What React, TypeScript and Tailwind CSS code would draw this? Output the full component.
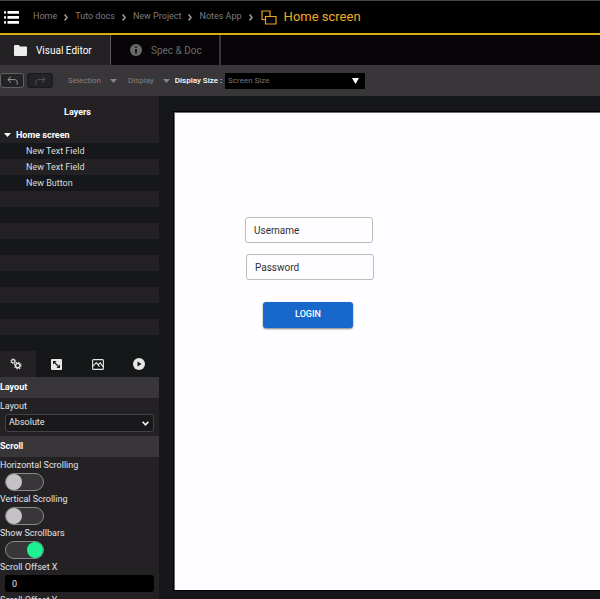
import { useState } from 'react';
import type { ReactNode } from 'react';

const breadcrumbs = ['Home', 'Tuto docs', 'New Project', 'Notes App'];

const layers = ['New Text Field', 'New Text Field', 'New Button'];

const EMPTY_ROWS = 9;

function Crumb({ label }: { label: string }) {
  return (
    <li className="flex items-center gap-[7px]">
      <a href="#" className="text-[9px] text-[#7d7d7d]">
        {label}
      </a>
      <svg className="w-1 h-[7px]" viewBox="0 0 4 7" fill="none" stroke="#a0a0a0" strokeWidth="1.5">
        <path d="M.6.5 3.1 3.5.6 6.5" />
      </svg>
    </li>
  );
}

function Caret() {
  return (
    <svg className="w-[7px] h-1 shrink-0" viewBox="0 0 7 4" fill="currentColor">
      <path d="M0 0h7L3.5 4z" />
    </svg>
  );
}

function SectionTitle({ children }: { children: ReactNode }) {
  return <h3 className="h-[21px] shrink-0 bg-[#383638] text-[9px] leading-5 font-bold text-white">{children}</h3>;
}

function Toggle({ id, label, defaultChecked = false }: { id: string; label: string; defaultChecked?: boolean }) {
  const [checked, setChecked] = useState(defaultChecked);

  return (
    <div className="flex flex-col items-start">
      <label htmlFor={id} className="h-4 text-[9px] leading-4 text-[#e4e4e4]">
        {label}
      </label>
      <input
        id={id}
        type="checkbox"
        checked={checked}
        onChange={(e) => setChecked(e.target.checked)}
        className="ml-[5px] flex h-[18px] w-[39px] appearance-none items-center rounded-full border border-[#8a8a8a] bg-[#383638] before:block before:size-4 before:rounded-full before:bg-[#c4c2c4] checked:justify-end checked:before:bg-[#1df293]"
      />
    </div>
  );
}

function Header() {
  return (
    <header className="flex h-[35px] shrink-0 items-center border-t border-b-2 border-t-[#444444] border-b-[#dba912] bg-black pl-1">
      <button aria-label="Menu">
        <svg className="block w-[15px] h-[13px]" viewBox="0 0 15 13" fill="#fff">
          <path d="M0 .3h2v2.200H0zM0 5.300h2v2.200H0zM0 10.300h2v2.200H0zM3.500 0H15v2.800H3.500zM3.500 5H15v2.800H3.500zM3.500 10H15v2.800H3.500z" />
        </svg>
      </button>
      <nav aria-label="Breadcrumb" className="ml-[14px]">
        <ol className="flex items-center gap-[7px]">
          {breadcrumbs.map((label) => (
            <Crumb key={label} label={label} />
          ))}
        </ol>
      </nav>
      <svg className="ml-2 w-4 h-[15px]" viewBox="0 0 16 15" fill="none" stroke="#e5a21c" strokeWidth="1.2">
        <path d="M4 9.500H1V1h8v5.500" />
        <path d="M4.500 6.500H15V14H4.500z" />
      </svg>
      <h1 className="ml-[7px] text-[13px] text-[#efab20]">Home screen</h1>
    </header>
  );
}

function EditorTabs() {
  return (
    <nav className="flex h-[30px] shrink-0 bg-[#070508] text-[10px]">
      <button className="flex w-[111px] items-center gap-[9px] border-r border-[#5a585a] bg-[#232123] pl-[14px] text-white">
        <svg className="w-[13px] h-[11px]" viewBox="0 0 13 11" fill="#ececec">
          <path d="M0 1.2C0 .5.5 0 1.2 0h3.6l1.400 1.500h5.600c.7 0 1.200.5 1.200 1.200v7c0 .7-.5 1.300-1.200 1.300H1.200C.5 11 0 10.400 0 9.700z" />
        </svg>
        Visual Editor
      </button>
      <button className="flex w-[110px] items-center gap-[9px] border-r-2 border-[#383638] pl-[19px] text-[#6a696a]">
        <svg className="size-3" viewBox="0 0 12 12">
          <circle cx="6" cy="6" r="6" fill="#6a696a" />
          <path d="M5.200 2.500h1.600v1.500H5.200zM5.200 5h1.600v4.500H5.200z" fill="#070508" />
        </svg>
        Spec &amp; Doc
      </button>
    </nav>
  );
}

function Toolbar() {
  return (
    <div className="flex h-[31px] shrink-0 items-center bg-[#383638] text-[8px] text-[#858385]">
      <button
        aria-label="Undo"
        className="flex h-[15px] w-6 items-center justify-center rounded-[3px] border border-[#636163] bg-[#232325] text-[#9a9a9a]"
      >
        <svg className="w-[11px] h-[9px]" viewBox="0 0 11 9" fill="none" stroke="currentColor">
          <path d="M4 .600.800 3.600 4 6.600M1 3.600h6.500c1.800 0 2.700 1 2.700 2.500V8.600" />
        </svg>
      </button>
      <button
        aria-label="Redo"
        className="ml-[3px] flex h-[15px] w-[26px] items-center justify-center rounded-[3px] border border-[#19191b] bg-[#232325] text-[#555355]"
      >
        <svg className="w-[11px] h-[9px]" viewBox="0 0 11 9" fill="none" stroke="currentColor">
          <path d="m7 .600 3.200 3L7 6.600M10 3.600H3.500C1.700 3.600.800 4.600.800 6.100V8.600" />
        </svg>
      </button>
      <button className="ml-[15px] flex items-center gap-[9px]">
        Selection
        <Caret />
      </button>
      <button className="ml-[11px] flex items-center gap-[9px]">
        Display
        <Caret />
      </button>
      <label htmlFor="display-size" className="ml-[5px] font-medium text-white">
        Display Size :
      </label>
      <div className="ml-[3px] grid w-[140px] items-center">
        <select
          id="display-size"
          className="col-start-1 row-start-1 h-4 appearance-none bg-black pl-[3px] text-[8px] text-[#777777]"
        >
          <option>Screen Size</option>
        </select>
        <svg
          className="pointer-events-none col-start-1 row-start-1 mr-[6px] h-[6px] w-[7px] justify-self-end"
          viewBox="0 0 7 6"
          fill="#fff"
        >
          <path d="M0 0h7L3.500 6z" />
        </svg>
      </div>
    </div>
  );
}

function LayerTree() {
  return (
    <section className="shrink-0 text-[9px] text-[#dcdcdc]">
      <h2 className="h-[31px] bg-[#232123] pr-1 text-center leading-8 font-bold text-white">Layers</h2>
      <ul className="leading-[17px]">
        <li className="flex h-4 items-center gap-[5px] bg-[#232123] pl-1 font-bold text-white">
          <Caret />
          Home screen
        </li>
        {layers.map((name, i) => (
          <li key={i} className="h-4 pl-[26px] odd:bg-[#232123]">
            {name}
          </li>
        ))}
        {Array.from({ length: EMPTY_ROWS }, (_, i) => (
          <li key={`empty-${i}`} className="h-4 odd:bg-[#232123]" />
        ))}
      </ul>
    </section>
  );
}

function PropertyTabs() {
  return (
    <div className="mt-4 flex h-[26px] shrink-0 bg-[#151719] text-[#e6e6e6]">
      <button aria-label="Settings" className="flex w-9 items-center justify-center bg-[#232123] pr-[5px]">
        <svg className="size-3" viewBox="0 0 12 12" fill="none" stroke="currentColor">
          <circle cx="3.200" cy="3.300" r="1.700" strokeWidth="1.100" />
          <circle cx="3.200" cy="3.300" r="2.500" strokeWidth=".8" strokeDasharray="1 .963" />
          <circle cx="7.800" cy="7.600" r="2.200" strokeWidth="1.400" />
          <circle cx="7.800" cy="7.600" r="3.300" strokeWidth="1.100" strokeDasharray="1.300 1.292" />
        </svg>
      </button>
      <button aria-label="Size" className="flex flex-1 items-center justify-center">
        <svg className="size-[11px]" viewBox="0 0 11 11">
          <rect width="11" height="11" rx="1" fill="currentColor" />
          <path d="M2 2h3.600L2 5.600zM9 9H5.400L9 5.400z" fill="#151719" />
          <path d="m3 3 5 5" stroke="#151719" strokeWidth="1.100" />
        </svg>
      </button>
      <button aria-label="Style" className="flex flex-1 items-center justify-center">
        <svg className="w-3 h-[11px]" viewBox="0 0 12 11" fill="none" stroke="currentColor" strokeWidth="1.100">
          <rect x=".6" y=".6" width="10.800" height="9.800" rx="1" />
          <path d="m1 7.200 3.300-3.500 3.200 4M6.300 5.500l1.900-1.600 3 4" />
        </svg>
      </button>
      <button aria-label="Actions" className="flex flex-1 items-center justify-center">
        <svg className="size-3" viewBox="0 0 12 12">
          <circle cx="6" cy="6" r="6" fill="currentColor" />
          <path d="M4.500 3.500v5L8.500 6z" fill="#151719" />
        </svg>
      </button>
    </div>
  );
}

function Properties() {
  return (
    <section className="flex min-h-0 flex-1 flex-col overflow-hidden bg-[#232123] text-[9px] text-[#e4e4e4]">
      <SectionTitle>Layout</SectionTitle>
      <label htmlFor="layout" className="h-4 shrink-0 leading-4">
        Layout
      </label>
      <div className="mx-[5px] mb-1 grid shrink-0 items-center">
        <select
          id="layout"
          className="col-start-1 row-start-1 h-[18px] appearance-none rounded-[3px] border border-[#444244] bg-[#19191b] pl-[3px] text-[9px]"
        >
          <option>Absolute</option>
        </select>
        <svg
          className="pointer-events-none col-start-1 row-start-1 mr-[5px] h-[5px] w-[7px] justify-self-end"
          viewBox="0 0 7 5"
          fill="none"
          stroke="#fff"
          strokeWidth="1.500"
        >
          <path d="m.600.800 2.900 3 2.900-3" />
        </svg>
      </div>
      <SectionTitle>Scroll</SectionTitle>
      <Toggle id="scroll-h" label="Horizontal Scrolling" />
      <Toggle id="scroll-v" label="Vertical Scrolling" />
      <Toggle id="scrollbars" label="Show Scrollbars" defaultChecked />
      <label htmlFor="offset-x" className="h-4 shrink-0 leading-4">
        Scroll Offset X
      </label>
      <input
        id="offset-x"
        defaultValue="0"
        className="mx-[5px] h-[17px] shrink-0 rounded-[3px] bg-black px-[7px] text-[9px]"
      />
      <label htmlFor="offset-y" className="h-4 shrink-0 leading-4">
        Scroll Offset Y
      </label>
      <input
        id="offset-y"
        defaultValue="0"
        className="mx-[5px] h-[17px] shrink-0 rounded-[3px] bg-black px-[7px] text-[9px]"
      />
    </section>
  );
}

function Canvas() {
  return (
    <main className="relative mt-4 mb-[9px] ml-[15px] min-w-0 flex-1 overflow-hidden border-t border-l border-[#6b6a6c] bg-[#fefdff] shadow-[0_0_0_1px_#000]">
      <input
        aria-label="Username"
        placeholder="Username"
        className="absolute top-[104px] left-[70px] h-[26px] w-32 rounded-[3px] border border-[#bdbdbd] px-2 text-[10px] placeholder:text-[#303030]"
      />
      <input
        type="password"
        aria-label="Password"
        placeholder="Password"
        className="absolute top-[141px] left-[71px] h-[26px] w-32 rounded-[3px] border border-[#bdbdbd] px-2 text-[10px] placeholder:text-[#303030]"
      />
      <button className="absolute top-[189px] left-[88px] h-[26px] w-[90px] rounded-[3px] bg-[#1868cc] text-[9px] font-medium text-white shadow-[0_1px_2px_#00000080]">
        LOGIN
      </button>
    </main>
  );
}

export default function App() {
  return (
    <div className="flex h-screen flex-col overflow-hidden bg-[#15171a] font-['Roboto',sans-serif]">
      <Header />
      <EditorTabs />
      <Toolbar />
      <div className="flex min-h-0 flex-1">
        <aside className="flex w-[159px] shrink-0 flex-col">
          <LayerTree />
          <PropertyTabs />
          <Properties />
        </aside>
        <Canvas />
      </div>
    </div>
  );
}
